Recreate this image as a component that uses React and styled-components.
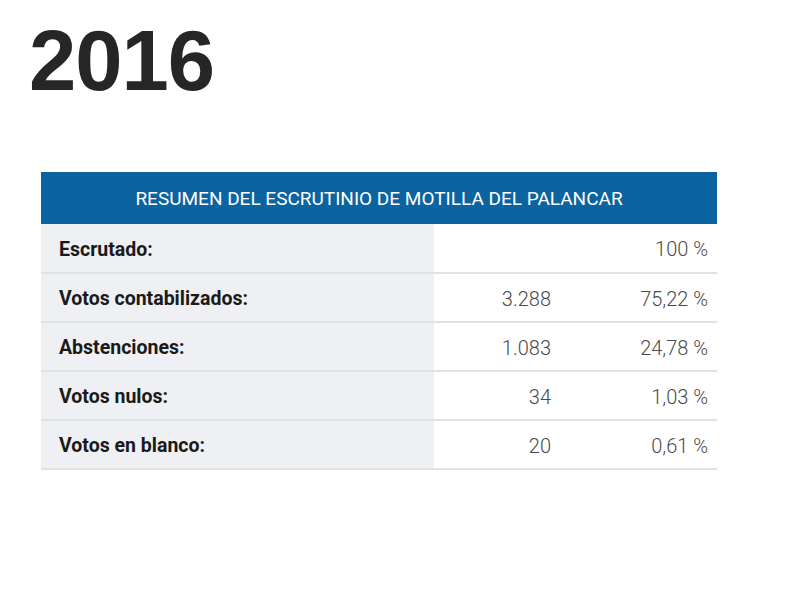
import styled, { createGlobalStyle } from "styled-components";

const GlobalStyle = createGlobalStyle`
  html, body {
    margin: 0;
    padding: 0;
    background: #fff;
  }
  body {
    font-family: Roboto, "Liberation Sans", sans-serif;
  }
`;

const Page = styled.div`
  width: 800px;
  height: 600px;
  box-sizing: border-box;
  padding: 16px 0 0 41px;
`;

const Year = styled.h1`
  margin: 0 0 0 -12px;
  font-family: "Liberation Sans", Arial, sans-serif;
  font-weight: 700;
  font-size: 85px;
  line-height: 90px;
  color: #262626;
  letter-spacing: -1px;
`;

const Table = styled.table`
  margin-top: 66px;
  width: 676px;
  border-collapse: collapse;
  table-layout: fixed;
`;

const Col = styled.col`
  width: ${(p) => p.$width}px;
`;

const HeadCell = styled.th`
  background: #0b63a0;
  color: #fff;
  height: 52px;
  padding: 0;
  font-weight: 400;
  font-size: 19px;
  text-align: center;
`;

const Row = styled.tr`
  height: 49px;
  border-bottom: 2px solid #e2e2e4;
`;

const Label = styled.td`
  background: #eff0f4;
  padding: 2px 0 0 18px;
  font-weight: 700;
  font-size: 19.5px;
  color: #1a1a1a;
`;

const Value = styled.td`
  text-align: right;
  padding: 2px ${(p) => p.$pad}px 0 0;
  font-weight: 300;
  font-size: 20px;
  color: #4a4a4a;
`;

const rows = [
  ["Escrutado:", "", "100 %"],
  ["Votos contabilizados:", "3.288", "75,22 %"],
  ["Abstenciones:", "1.083", "24,78 %"],
  ["Votos nulos:", "34", "1,03 %"],
  ["Votos en blanco:", "20", "0,61 %"],
];

export default function App() {
  return (
    <Page>
      <GlobalStyle />
      <Year>2016</Year>
      <Table>
        <colgroup>
          <Col $width={393} />
          <Col $width={122} />
          <Col $width={161} />
        </colgroup>
        <thead>
          <tr>
            <HeadCell colSpan={3}>RESUMEN DEL ESCRUTINIO DE MOTILLA DEL PALANCAR</HeadCell>
          </tr>
        </thead>
        <tbody>
          {rows.map(([label, count, pct]) => (
            <Row key={label}>
              <Label>{label}</Label>
              <Value $pad={5}>{count}</Value>
              <Value $pad={9}>{pct}</Value>
            </Row>
          ))}
        </tbody>
      </Table>
    </Page>
  );
}
